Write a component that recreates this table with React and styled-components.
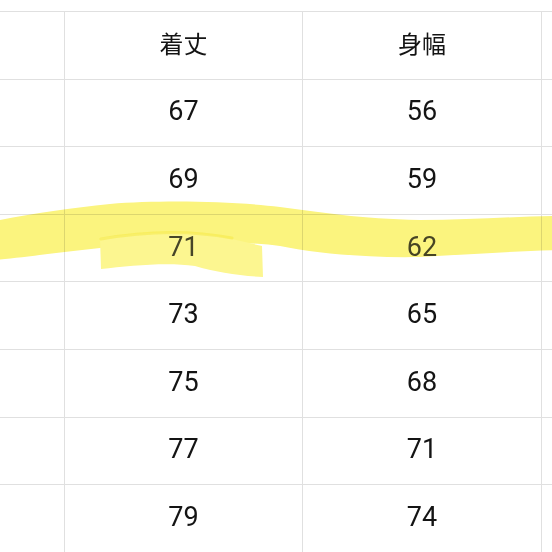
import React from "react";
import styled, { createGlobalStyle } from "styled-components";

const Global = createGlobalStyle`
  html, body {
    margin: 0;
    padding: 0;
    background: #ffffff;
  }
`;

const Page = styled.div`
  position: relative;
  width: 552px;
  height: 552px;
  overflow: hidden;
  background: #ffffff;
`;

const Grid = styled.div`
  margin-top: 11px;
  display: grid;
  grid-template-columns: 65px 238px 239px 1fr;
  grid-auto-rows: 67.6px;
  border-top: 1px solid #e0e0e0;
`;

const Cell = styled.div`
  box-sizing: border-box;
  display: flex;
  align-items: center;
  justify-content: center;
  padding-bottom: 3px;
  border-bottom: 1px solid #e0e0e0;
  border-right: ${(p) => (p.$last ? "none" : "1px solid #e0e0e0")};
  font-family: Roboto, "Noto Sans", sans-serif;
  font-size: 27px;
  color: ${(p) => (p.$marked ? "#474747" : "#141414")};
`;

const HeadCell = styled(Cell)`
  font-family: "Noto Sans CJK JP", "Noto Sans", sans-serif;
  font-size: 24px;
  padding-bottom: 5px;
`;

const Marker = styled.svg`
  position: absolute;
  left: 0;
  top: 0;
  width: 552px;
  height: 552px;
  pointer-events: none;
  mix-blend-mode: multiply;
`;

const rows = [
  ["67", "56"],
  ["69", "59"],
  ["71", "62"],
  ["73", "65"],
  ["75", "68"],
  ["77", "71"],
  ["79", "74"],
];

const Highlight = () => (
  <Marker viewBox="0 0 552 552">
    <path
      d="M -5 221 C 30 214, 70 208, 110 204 C 160 200, 230 201, 280 207 C 320 212, 360 219, 420 220 C 470 220, 520 216, 560 216 L 560 250 C 520 251, 470 254, 420 257 C 370 258, 320 254, 280 246 C 240 240, 150 243, 100 248 C 60 252, 20 258, -5 260 Z"
      fill="#fbf47e"
    />
    <path
      d="M 100 238 C 140 232, 190 229, 232 239 L 262 246 L 263 277 C 240 276, 215 272, 195 266 C 165 262, 130 266, 101 269 Z"
      fill="#fcf690"
    />
    <path
      d="M 101 239 C 140 232, 185 229, 232 238"
      fill="none"
      stroke="#f3e63a"
      strokeWidth="3"
      strokeLinecap="round"
      opacity="0.45"
    />
  </Marker>
);

const App = () => {
  return (
    <Page>
      <Global />
      <Grid>
        <HeadCell />
        <HeadCell>着丈</HeadCell>
        <HeadCell>身幅</HeadCell>
        <HeadCell $last />
        {rows.map(([length, width], i) => (
          <React.Fragment key={i}>
            <Cell />
            <Cell $marked={i === 2}>{length}</Cell>
            <Cell $marked={i === 2}>{width}</Cell>
            <Cell $last />
          </React.Fragment>
        ))}
      </Grid>
      <Highlight />
    </Page>
  );
};

export default App;
